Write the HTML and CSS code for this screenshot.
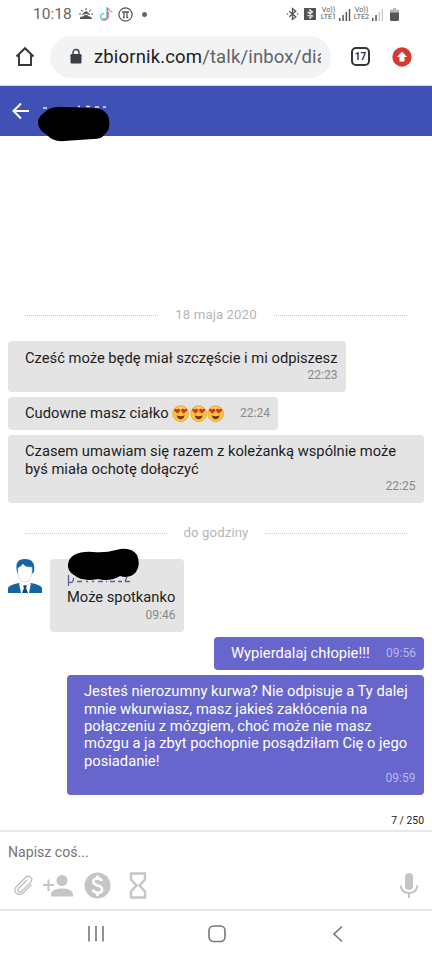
FILE: index.html
```
<!DOCTYPE html>
<html lang="pl">
<head>
<meta charset="utf-8">
<meta name="viewport" content="width=device-width">
<title>Wiadomości</title>
<link rel="stylesheet" href="styles.css">
</head>
<body>
<svg width="0" height="0" class="defs">
  <symbol id="heart-eyes" viewBox="0 0 34 34">
    <circle cx="17" cy="17" r="15.5" fill="#f9c53d" stroke="#e2a03a" stroke-width="1.500"/>
    <path d="M5 12Q17-3 29 12Q17 6 5 12" fill="#ffe373"/>
    <path d="M11 17 5 12C2 8 7 6 10 9c3-4 7-1 6 3zM23 17l-5-5c-1-4 3-7 6-3 3-3 8-1 5 3z" fill="#d83424"/>
    <path d="M9 20Q17 24 25 20Q23 28 17 28T9 20Z" fill="#713a20"/>
  </symbol>
  <symbol id="bluetooth" viewBox="0 0 24 24">
    <path d="M6 7l12 10-6 5V2l6 5L6 17" fill="none" stroke="currentColor" stroke-width="2.5"/>
  </symbol>
</svg>
<div class="phone">
  <header class="status">
    <span class="clock">10:18</span>
    <svg class="weather" width="14" height="12" viewBox="0 0 14 12"><path d="M1 11V9.500Q2 8 4 8.500Q7 5 10 8.500Q13 8 13 11Z" fill="#555"/><path d="M3.500 6.500Q7 1 10.500 6.500Q7 4 3.500 6.500M7 0v2M2 2l2 1.500M12 2l-2 1.500M0 6h2M12 6h2" fill="#555" stroke="#555"/></svg>
    <svg class="tiktok" width="14" height="16" viewBox="0 0 14 16" fill="none"><path d="M8 1v9.500a3.200 3.200 0 1 1-3-3" stroke="#65d4dc" stroke-width="1.600"/><path d="M9.500 2q.5 3.500 4 3.800M9.500 6v5a4 4 0 0 1-7 2" stroke="#e98ca6" stroke-width="1.200"/><path d="M8.700 2v9a3 3 0 0 1-5 1" stroke="#777" stroke-width=".7"/></svg>
    <svg class="pi" width="15" height="15" viewBox="0 0 15 15" fill="none" stroke="#555"><circle cx="7.500" cy="7.500" r="6.600" stroke-width="1.200"/><path d="M4 5h7M6 5v5.500H4.700M9 5v5.500h1.300" stroke-width="1.300"/></svg>
    <i class="notice-dot"></i>
    <div class="signals">
      <svg class="bt" width="13" height="14"><use href="#bluetooth"/><circle cx="1.500" cy="7" r=".8"/><circle cx="11.500" cy="7" r=".8"/></svg>
      <span class="bt-box"><svg width="10" height="10"><use href="#bluetooth"/></svg></span>
      <span class="lte">Vo))<br>LTE1</span>
      <svg class="bars" width="12" height="13" fill="#555"><path d="M0 10h1.500v3H0zM3.300 7h1.500v6H3.300zM6.600 4h1.500v9H6.600zM9.800 1h1.400v12H9.800z"/></svg>
      <span class="lte">Vo))<br>LTE2</span>
      <svg class="bars" width="12" height="13" fill="#555"><path d="M0 10h1.500v3H0zM3.300 7h1.500v6H3.300z"/><path d="M6.600 4h1.500v9H6.600zM9.800 1h1.200v12H9.800z" fill="#c7c7c7"/></svg>
      <svg class="battery" width="9" height="13"><path d="M3 0h3v1.500h3V5H0V1.500h3z" fill="#bbb"/><path d="M0 4.500h9V12l-1 1H1l-1-1z" fill="#555"/></svg>
    </div>
  </header>
  <nav class="browser">
    <svg class="home" width="20" height="21" viewBox="0 0 20 21"><path d="M1.500 10.500 10 2.200l8.500 8.300M4 9v10h12V9" fill="none" stroke="#333538" stroke-width="1.900"/></svg>
    <div class="address">
      <svg width="12" height="15" viewBox="0 0 12 15"><rect x=".5" y="5" width="11" height="9.500" rx="1.200" fill="#3c4043"/><path d="M3 6V3.500a3 3 0 0 1 6 0V6" fill="none" stroke="#3c4043" stroke-width="1.400"/></svg>
      <div class="url"><span>zbiornik.com</span>/talk/inbox/dia</div>
    </div>
    <div class="tabs">17</div>
    <svg class="update" width="20" height="20" viewBox="0 0 20 20"><circle cx="10" cy="10" r="9.700" fill="#d53a2f"/><path d="M10 4.500 15 10h-2.500v4.500h-5V10H5z" fill="#fff"/></svg>
  </nav>
  <div class="appbar">
    <svg class="back" width="18" height="18" viewBox="0 0 18 18"><path d="M9 1.500 1.500 9 9 16.500M1.500 9H17" fill="none" stroke="#fff" stroke-width="2"/></svg>
    <svg class="title-mask" width="76" height="40" viewBox="0 0 76 40"><path d="M7 5h4M42 3.500h2M50 3.500h4M59 4h4M67 4h3" stroke="#dfe2f5" stroke-width="1.500"/><path d="M2 18Q3 13 10 8Q17 3 28 4L59 5Q71 6 73 16Q75 27 68 32Q66 36 57 36L28 38Q17 39 11 32Q1 26 2 18Z"/></svg>
  </div>
  <main class="chat">
    <div class="separator">18 maja 2020</div>
    <div class="message"><p>Cześć może będę miał szczęście i mi odpiszesz</p><time>22:23</time></div>
    <div class="message single"><p>Cudowne masz ciałko <span class="emojis"><svg><use href="#heart-eyes"/></svg><svg><use href="#heart-eyes"/></svg><svg><use href="#heart-eyes"/></svg></span></p><time>22:24</time></div>
    <div class="message long"><p>Czasem umawiam się razem z koleżanką wspólnie może<br>byś miała ochotę dołączyć</p><time>22:25</time></div>
    <div class="separator today">do godziny</div>
    <div class="incoming">
      <svg class="avatar" width="34" height="35" viewBox="0 0 34 35"><path d="M0 34v-5q1-3 11-5l6 3 6-3q10 2 11 5v5z" fill="#1764a5"/><path d="m11 24 6 3 6-3-2 10h-8z" fill="#fff"/><path d="m15 27 2-1 2 1-1 2 2 5h-6l2-5z" fill="#174779"/><path d="M9 13Q6 0 17 0t9 13l-2 2-2-7H12l-2 7z" fill="#1764a5"/><path d="M10 9q4-2 5-4 3 4 9 3 1 15-7 15T10 9" fill="#fff" stroke="#b8cddd" stroke-width=".6"/></svg>
      <div class="message named"><div class="sender">
        <svg width="74" height="42" viewBox="0 0 74 42"><path d="M1.500 27v11M1.500 34q5 2 5-4M10 33.500h5M19 33.500h2M25 33.500h2M31 33.500h5M39 33.500h1M43 33.500h5M51 33.500h4M58 33.500h5M60 29l-2 4" fill="none" stroke="#5360aa" stroke-width="1.300"/><path d="M1 16Q2 10 7 7Q15 3 26 4Q39 5 49 2Q64-2 70 7Q74 16 69 24Q63 31 53 28Q43 34 31 31Q15 34 7 27Q0 23 1 16Z"/></svg>
      </div><p>Może spotkanko</p><time>09:46</time></div>
    </div>
    <div class="message mine single"><p>Wypierdalaj chłopie!!!</p><time>09:56</time></div>
    <div class="message mine big"><p>Jesteś nierozumny kurwa? Nie odpisuje a Ty dalej<br>mnie wkurwiasz, masz jakieś zakłócenia na<br>połączeniu z mózgiem, choć może nie masz<br>mózgu a ja zbyt pochopnie posądziłam Cię o jego<br>posiadanie!</p><time>09:59</time></div>
    <div class="counter">7 / 250</div>
  </main>
  <section class="composer">
    <div class="placeholder">Napisz coś...</div>
    <div class="tools">
      <svg class="clip" width="20" height="22" viewBox="0 0 20 22"><path d="m14 5-8.500 8.500c-2 2 1 5 3 3l9-9c4-4-1.500-8-5-5l-9 9c-5 5 2 11 7 6l8-8" fill="none" stroke="#bdbdbd" stroke-width="1.300"/></svg>
      <svg class="person" width="30" height="22" viewBox="0 0 30 22" fill="#c5c5c5"><circle cx="19" cy="5.500" r="5.500"/><path d="M8 21.500v-3q2-5 11-5t11 5v3zM4.500 4.500h2V9H11v2H6.500v5h-2v-5H0V9h4.500z"/></svg>
      <svg class="money" width="27" height="27" viewBox="0 0 27 27"><circle cx="13.500" cy="13.500" r="13" fill="#c5c5c5"/><path d="M17.800 9q-1-2.600-4.300-2.600-4.200 0-4.200 3.200 0 2.700 4.300 3.800 4.500 1.100 4.500 4 0 3.300-4.500 3.300-4 0-4.800-3M13.500 3.500v3M13.500 20v4" fill="none" stroke="#fff" stroke-width="2.600"/></svg>
      <svg class="hourglass" width="18" height="27" viewBox="0 0 18 27"><path d="M2 1.500h14v6L10.500 13.500l5.500 6v6H2v-6l5.500-6L2 7.500z" fill="none" stroke="#c5c5c5" stroke-width="2.400"/></svg>
      <svg class="mic" width="20" height="26" viewBox="0 0 20 26"><rect x="6" y="0" width="8" height="17" rx="4" fill="#c5c5c5"/><path d="M1.500 12.500q1 7.500 8.500 7.500t8.500-7.500M10 20v5" fill="none" stroke="#c5c5c5" stroke-width="2"/></svg>
    </div>
  </section>
  <footer class="system-nav">
    <svg width="18" height="18" viewBox="0 0 18 18"><path d="M2 1v15.500M9 1v15.500M16 1v15.500" stroke="#777" stroke-width="1.600"/></svg>
    <svg width="18" height="18" viewBox="0 0 18 18"><rect x="1" y="1" width="16" height="15.500" rx="4.500" fill="none" stroke="#777" stroke-width="1.600"/></svg>
    <svg width="18" height="18" viewBox="0 0 18 18"><path d="M13 1.500 5 9l8 7.500" fill="none" stroke="#777" stroke-width="1.600"/></svg>
  </footer>
</div>
</body>
</html>
```
FILE: styles.css
```
* { box-sizing: border-box; }
body { margin: 0; background: #fff; font-family: Roboto, sans-serif; }
p { margin: 0; }
svg { display: block; flex: none; overflow: visible; }
.defs { position: absolute; }
.phone { width: 432px; height: 960px; overflow: hidden; display: flex; flex-direction: column; }
.status { height: 28px; flex: none; display: flex; align-items: center; padding: 0 33px 0 33px; color: #555; }
.clock { width: 45px; font-size: 15.500px; color: #666; line-height: 28px; white-space: nowrap; }
.weather { margin-left: 1px; }
.tiktok { margin-left: 6px; }
.pi { margin-left: 5px; }
.notice-dot { width: 5px; height: 5px; border-radius: 50%; background: #666; margin-left: 9px; }
.signals { display: flex; align-items: center; margin-left: auto; }
.bt { fill: #555; }
.bt-box { width: 12px; height: 12px; margin: 0 4px 0 5px; display: grid; place-items: center; background: #555; color: #fff; }
.lte { width: 17px; font-size: 7.200px; line-height: 6.800px; font-weight: 400; text-align: center; white-space: nowrap; }
.bars { margin: 0 2px; }
.battery { margin-left: 4px; }
.browser { height: 58px; flex: none; display: flex; align-items: center; padding: 0 20px 0 15px; border-bottom: 1px solid #d5d5d5; }
.address { width: 281px; height: 42px; margin-left: 15px; border-radius: 21px; background: #f1f3f4; display: flex; align-items: center; padding: 0 10px 0 20px; }
.url { flex: 1; margin-left: 12px; overflow: hidden; white-space: nowrap; font-size: 18.500px; letter-spacing: .15px; line-height: 24px; color: #5f6368; }
.url span { color: #202124; }
.tabs { width: 19px; height: 19px; margin-left: 20px; border: 2px solid #333538; border-radius: 5px; font-size: 10px; font-weight: 700; line-height: 15px; text-align: center; color: #333538; }
.update { margin-left: auto; }
.appbar { height: 50px; flex: none; display: flex; padding-left: 12px; background: #3f51b5; }
.back { margin-top: 16px; }
.title-mask { margin: 17px 0 0 6px; position: relative; z-index: 1; }
.chat { height: 694px; flex: none; display: flex; flex-direction: column; align-items: flex-start; padding: 170px 8px 0; }
.separator { display: flex; align-items: center; align-self: stretch; gap: 17px; margin: 0 17px; height: 18px; font-size: 13.200px; font-weight: 400; letter-spacing: .1px; line-height: 18px; color: #b5b5b5; white-space: nowrap; }
.separator::before, .separator::after { content: ""; flex: 1; border-top: 1px dotted #c8c8c8; }
.message { display: flex; flex-direction: column; margin-top: 4.500px; padding: 8.500px 8.500px 8px 17px; border-radius: 4px; background: #e4e4e4; color: #1c1c1c; font-size: 14.720px; line-height: 17.330px; white-space: nowrap; }
.separator + .message { margin-top: 17px; width: 338px; }
.message time { align-self: flex-end; font-size: 12px; color: #888; }
.single { flex-direction: row; justify-content: space-between; width: 270px; }
.message.single { padding-right: 8px; }
.emojis { display: inline-flex; vertical-align: top; }
.emojis svg { width: 17.330px; height: 17.330px; }
.long { width: 416px; }
.today { margin-top: 21px; }
.incoming { display: flex; margin-top: 16.500px; gap: 8px; }
.named { width: 134px; margin-top: 0; }
.sender { height: 22px; }
.sender svg { position: relative; top: -19.500px; }
.mine { align-self: flex-end; background: #6666cc; color: #fff; }
.mine time { color: #b9b9e8; }
.mine.single { width: 210px; }
.big { width: 357px; }
.counter { align-self: flex-end; margin-top: 18.500px; font-size: 10.400px; line-height: 14px; color: #222; }
.composer { height: 81px; flex: none; border-top: 2px solid #e9e9e9; border-bottom: 2px solid #e6e6e6; padding: 11px 13px 0 8px; }
.placeholder { font-size: 14.100px; line-height: 18px; color: #757575; }
.tools { height: 27px; margin-top: 11px; display: flex; align-items: center; }
.clip { margin-left: 5px; }
.person { margin-left: 10px; }
.money { margin-left: 11px; }
.hourglass { margin-left: 18px; }
.mic { margin-left: auto; }
.system-nav { flex: 1; display: flex; justify-content: space-between; padding: 14px 85px 0 87px; }
```
